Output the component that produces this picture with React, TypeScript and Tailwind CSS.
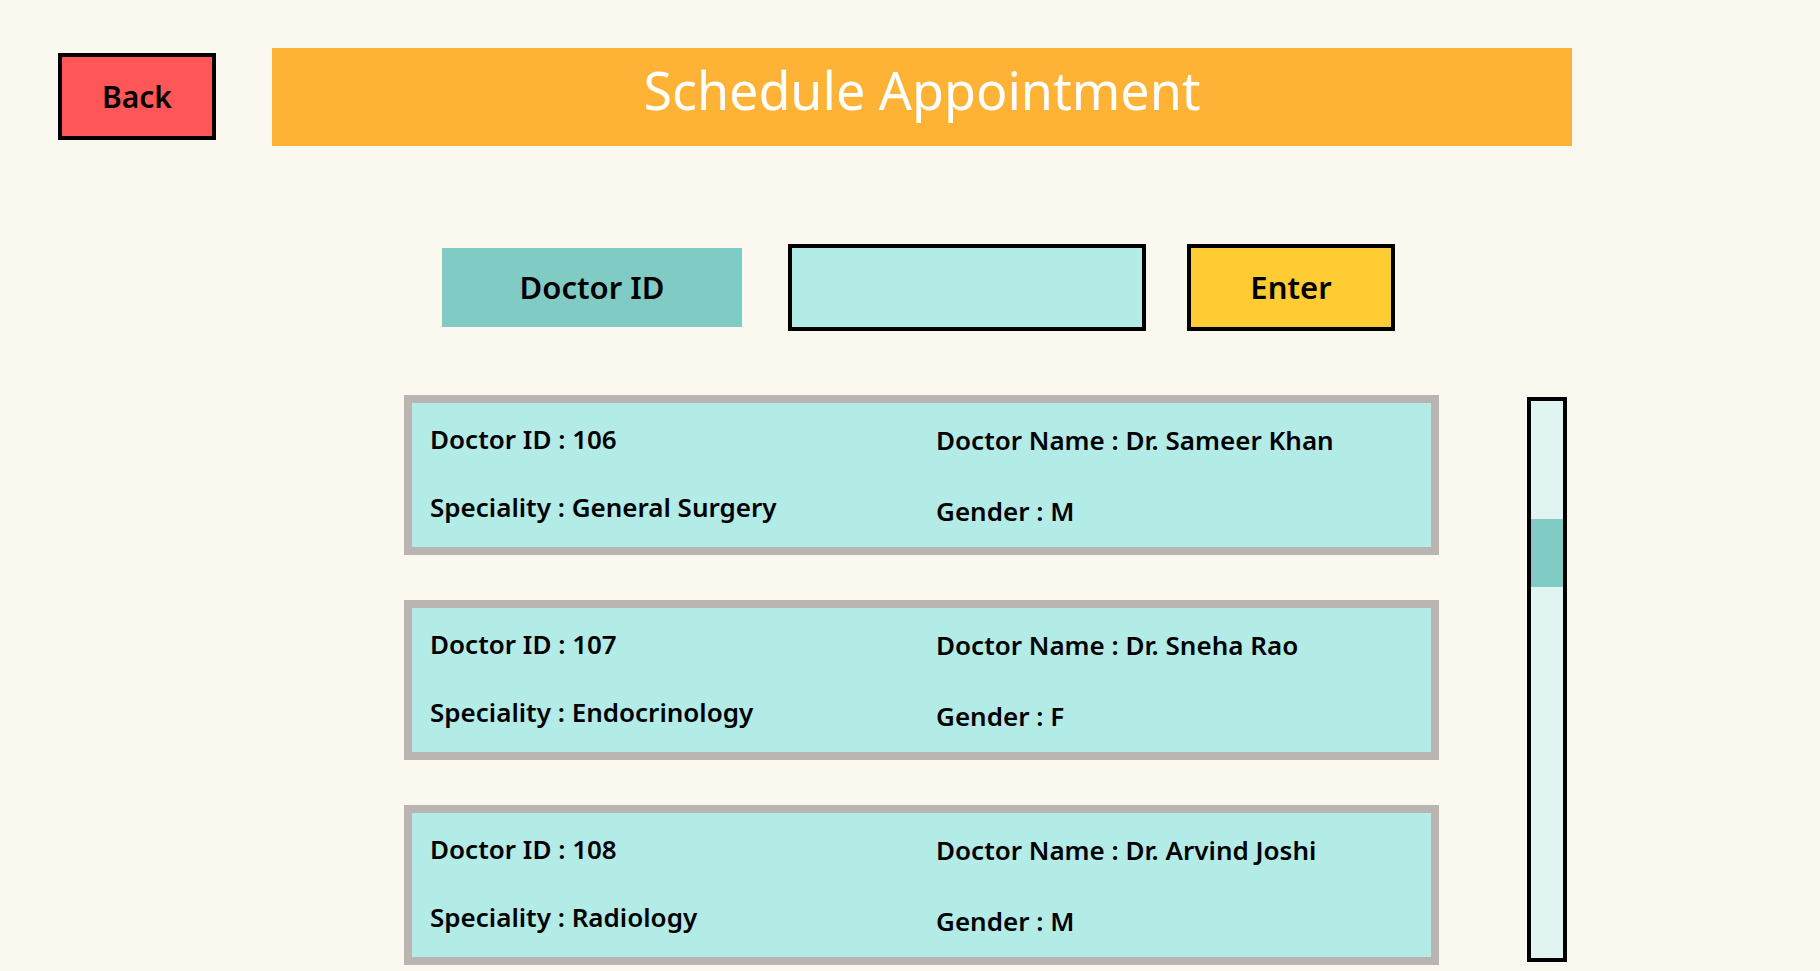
import React from 'react';

interface Doctor {
  id: number;
  name: string;
  speciality: string;
  gender: 'M' | 'F';
}

const DOCTORS: Doctor[] = [
  { id: 106, name: 'Dr. Sameer Khan', speciality: 'General Surgery', gender: 'M' },
  { id: 107, name: 'Dr. Sneha Rao', speciality: 'Endocrinology', gender: 'F' },
  { id: 108, name: 'Dr. Arvind Joshi', speciality: 'Radiology', gender: 'M' },
];

const FONT = { fontFamily: '"Noto Sans", "Open Sans", sans-serif' };

const DoctorCard: React.FC<{ doctor: Doctor }> = ({ doctor }) => (
  <div className="h-[160px] border-[8px] border-[#bab5b3] bg-[#b3ebe6] pl-[18px] pt-[19px] flex text-[26px] font-semibold text-black leading-[34px]">
    <div className="w-[506px] flex flex-col gap-[34px]">
      <span>Doctor ID : {doctor.id}</span>
      <span>Speciality : {doctor.speciality}</span>
    </div>
    <div className="flex flex-col gap-[37px] pt-[1px]">
      <span>Doctor Name : {doctor.name}</span>
      <span>Gender : {doctor.gender}</span>
    </div>
  </div>
);

export default function App() {
  return (
    <div className="w-[1820px] h-[971px] overflow-hidden bg-[#fbf8f0]" style={FONT}>
      {/* Header */}
      <div className="flex items-start pl-[58px] pt-[48px]">
        <button className="mt-[5px] w-[158px] h-[87px] border-[4px] border-black bg-[#ff5757] text-[30px] font-semibold text-black flex items-center justify-center">
          Back
        </button>
        <div className="ml-[56px] w-[1300px] h-[98px] bg-[#ffb336] flex items-center justify-center pb-[14px]">
          <h1 className="text-[52px] text-white">Schedule Appointment</h1>
        </div>
      </div>

      {/* Search row */}
      <div className="flex items-center pl-[442px] mt-[98px]">
        <div className="w-[300px] h-[79px] bg-[#80cbc4] flex items-center justify-center text-[31px] font-semibold text-black">
          Doctor ID
        </div>
        <input
          className="ml-[46px] w-[358px] h-[87px] border-[4px] border-black bg-[#b3ebe6] outline-none px-3 text-[25px]"
          defaultValue=""
        />
        <button className="ml-[41px] w-[208px] h-[87px] border-[4px] border-black bg-[#ffcc33] flex items-center justify-center text-[31px] font-semibold text-black">
          Enter
        </button>
      </div>

      {/* Doctor list */}
      <div className="flex items-start pl-[404px] mt-[64px]">
        <div className="w-[1035px] h-[580px] overflow-hidden flex flex-col gap-[45px]">
          {DOCTORS.map(d => (
            <DoctorCard key={d.id} doctor={d} />
          ))}
        </div>
        <div className="ml-[88px] mt-[2px] w-[40px] h-[565px] border-[4px] border-black bg-[#e0f5f2] pt-[118px]">
          <div className="h-[68px] bg-[#80cbc4]" />
        </div>
      </div>
    </div>
  );
}
